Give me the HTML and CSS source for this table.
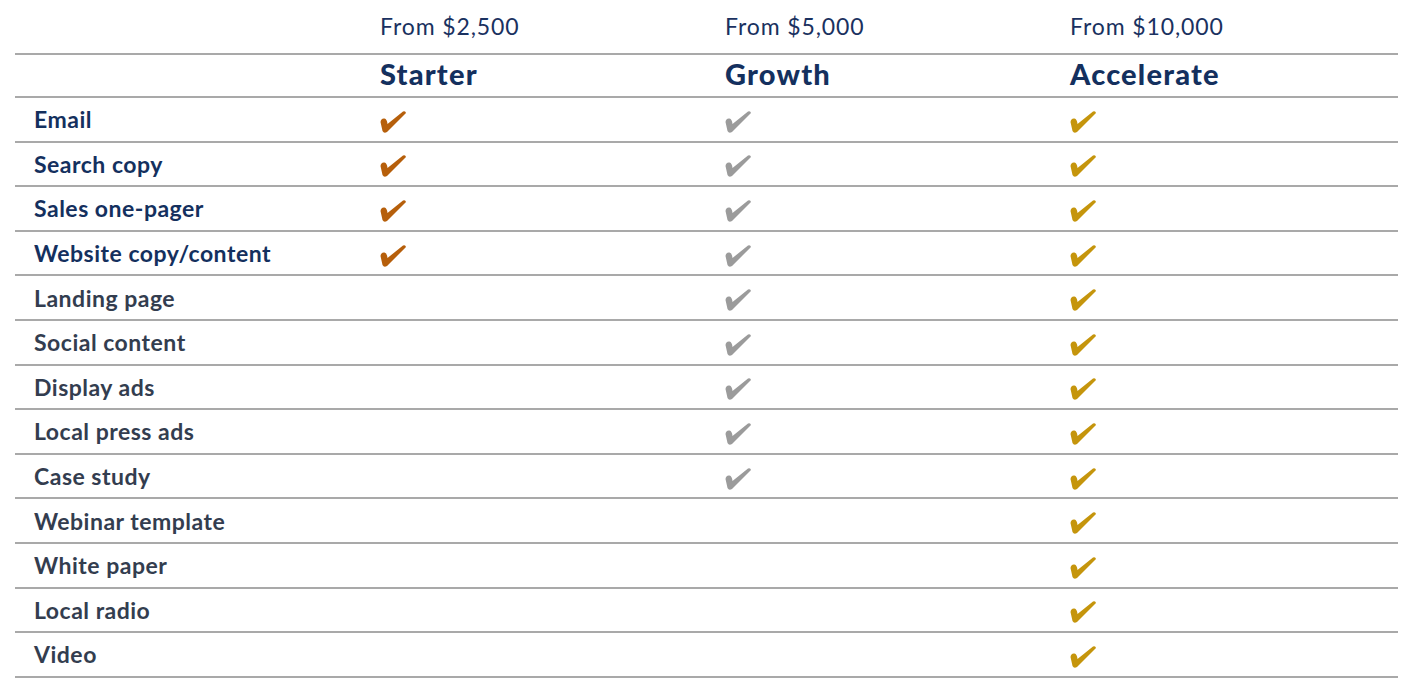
FILE: index.html
```html
<!DOCTYPE html>
<html lang="en">
<head>
<meta charset="utf-8">
<title>Packages</title>
<link rel="stylesheet" href="styles.css">
</head>
<body>
<svg width="0" height="0" class="defs" aria-hidden="true">
  <defs>
    <path id="chk" d="M0.5,11 Q1,7 4.5,7.5 Q7,8 7.5,13 L23,0.5 Q25.5,-0.5 26,2 L7,21 Q4,23 2.5,20 Z"/>
  </defs>
</svg>
<div class="table">
  <div class="row head-price">
    <div class="cell"></div>
    <div class="cell">From $2,500</div>
    <div class="cell">From $5,000</div>
    <div class="cell">From $10,000</div>
  </div>
  <div class="row head-name">
    <div class="cell"></div>
    <div class="cell">Starter</div>
    <div class="cell">Growth</div>
    <div class="cell">Accelerate</div>
  </div>

  <div class="row">
    <div class="cell label core">Email</div>
    <div class="cell"><svg class="check orange" viewBox="0 0 26 22"><use href="#chk"/></svg></div>
    <div class="cell"><svg class="check grey" viewBox="0 0 26 22"><use href="#chk"/></svg></div>
    <div class="cell"><svg class="check gold" viewBox="0 0 26 22"><use href="#chk"/></svg></div>
  </div>
  <div class="row">
    <div class="cell label core">Search copy</div>
    <div class="cell"><svg class="check orange" viewBox="0 0 26 22"><use href="#chk"/></svg></div>
    <div class="cell"><svg class="check grey" viewBox="0 0 26 22"><use href="#chk"/></svg></div>
    <div class="cell"><svg class="check gold" viewBox="0 0 26 22"><use href="#chk"/></svg></div>
  </div>
  <div class="row">
    <div class="cell label core">Sales one-pager</div>
    <div class="cell"><svg class="check orange" viewBox="0 0 26 22"><use href="#chk"/></svg></div>
    <div class="cell"><svg class="check grey" viewBox="0 0 26 22"><use href="#chk"/></svg></div>
    <div class="cell"><svg class="check gold" viewBox="0 0 26 22"><use href="#chk"/></svg></div>
  </div>
  <div class="row">
    <div class="cell label core">Website copy/content</div>
    <div class="cell"><svg class="check orange" viewBox="0 0 26 22"><use href="#chk"/></svg></div>
    <div class="cell"><svg class="check grey" viewBox="0 0 26 22"><use href="#chk"/></svg></div>
    <div class="cell"><svg class="check gold" viewBox="0 0 26 22"><use href="#chk"/></svg></div>
  </div>
  <div class="row">
    <div class="cell label">Landing page</div>
    <div class="cell"></div>
    <div class="cell"><svg class="check grey" viewBox="0 0 26 22"><use href="#chk"/></svg></div>
    <div class="cell"><svg class="check gold" viewBox="0 0 26 22"><use href="#chk"/></svg></div>
  </div>
  <div class="row">
    <div class="cell label">Social content</div>
    <div class="cell"></div>
    <div class="cell"><svg class="check grey" viewBox="0 0 26 22"><use href="#chk"/></svg></div>
    <div class="cell"><svg class="check gold" viewBox="0 0 26 22"><use href="#chk"/></svg></div>
  </div>
  <div class="row">
    <div class="cell label">Display ads</div>
    <div class="cell"></div>
    <div class="cell"><svg class="check grey" viewBox="0 0 26 22"><use href="#chk"/></svg></div>
    <div class="cell"><svg class="check gold" viewBox="0 0 26 22"><use href="#chk"/></svg></div>
  </div>
  <div class="row">
    <div class="cell label">Local press ads</div>
    <div class="cell"></div>
    <div class="cell"><svg class="check grey" viewBox="0 0 26 22"><use href="#chk"/></svg></div>
    <div class="cell"><svg class="check gold" viewBox="0 0 26 22"><use href="#chk"/></svg></div>
  </div>
  <div class="row">
    <div class="cell label">Case study</div>
    <div class="cell"></div>
    <div class="cell"><svg class="check grey" viewBox="0 0 26 22"><use href="#chk"/></svg></div>
    <div class="cell"><svg class="check gold" viewBox="0 0 26 22"><use href="#chk"/></svg></div>
  </div>
  <div class="row">
    <div class="cell label">Webinar template</div>
    <div class="cell"></div>
    <div class="cell"></div>
    <div class="cell"><svg class="check gold" viewBox="0 0 26 22"><use href="#chk"/></svg></div>
  </div>
  <div class="row">
    <div class="cell label">White paper</div>
    <div class="cell"></div>
    <div class="cell"></div>
    <div class="cell"><svg class="check gold" viewBox="0 0 26 22"><use href="#chk"/></svg></div>
  </div>
  <div class="row">
    <div class="cell label">Local radio</div>
    <div class="cell"></div>
    <div class="cell"></div>
    <div class="cell"><svg class="check gold" viewBox="0 0 26 22"><use href="#chk"/></svg></div>
  </div>
  <div class="row">
    <div class="cell label">Video</div>
    <div class="cell"></div>
    <div class="cell"></div>
    <div class="cell"><svg class="check gold" viewBox="0 0 26 22"><use href="#chk"/></svg></div>
  </div>
</div>
</body>
</html>
```
FILE: styles.css
```css
html, body {
  margin: 0;
  padding: 0;
  background: #ffffff;
}

body {
  font-family: Lato, "Liberation Sans", sans-serif;
  color: #14305e;
}

.defs {
  position: absolute;
  width: 0;
  height: 0;
}

.table {
  margin: 0 14px 0 15px;
}

.row {
  display: grid;
  grid-template-columns: 346px 345px 345px 1fr;
  height: 42.6px;
  border-bottom: 2px solid #a9a9a9;
}

.cell {
  padding-left: 19px;
  display: flex;
  align-items: center;
  font-size: 23px;
  font-weight: 700;
  letter-spacing: 0.5px;
  white-space: nowrap;
}

.head-price {
  height: 53px;
}

.head-price .cell {
  font-weight: 400;
  font-size: 23px;
  letter-spacing: 0.9px;
  align-items: flex-start;
  padding-top: 12px;
  color: #1a3160;
}

.head-name {
  height: 41px;
}

.head-name .cell {
  font-size: 29px;
  font-weight: 900;
  letter-spacing: 1.2px;
  color: #14305e;
  padding-bottom: 4px;
}

.label {
  color: #333d4f;
}

.label.core {
  color: #14305e;
}

.check {
  width: 26px;
  height: 22px;
  margin-top: 5px;
  display: block;
}

.check.orange { fill: #b65f0b; }
.check.grey { fill: #9b9b9b; }
.check.gold { fill: #c5950c; }
```
